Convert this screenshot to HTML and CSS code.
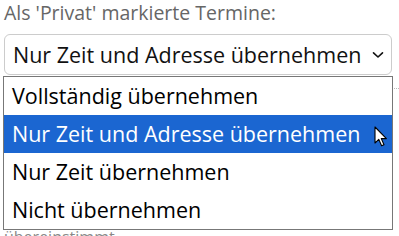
FILE: index.html
```html
<!DOCTYPE html>
<html lang="de">
<head>
    <meta charset="UTF-8">
    <meta name="viewport" content="width=device-width, initial-scale=1.0">
    <title>Termine</title>
    <link rel="stylesheet" href="styles.css">
</head>
<body>
    <div class="page">
        <div class="field-label">Als 'Privat' markierte Termine:</div>

        <div class="select">
            <span class="select-value">Nur Zeit und Adresse übernehmen</span>
            <svg class="chevron" width="12" height="8" viewBox="0 0 12 8">
                <path d="M1.5 1.8 L6 6 L10.5 1.8" fill="none" stroke="#111" stroke-width="1.6" stroke-linecap="round" stroke-linejoin="round"/>
            </svg>
        </div>

        <!-- content of the page that sits under the open list -->
        <div class="behind">
            <div class="separator"></div>
            <div class="behind-text">
                <div class="behind-line"><span class="hidden-part">Termine, deren Ort nicht mit der</span><span class="tail">A</span></div>
                <div class="behind-line"><span class="hidden-part">Adresse eines Kontakts</span><span class="tail">n</span></div>
                <div class="behind-line">übereinstimmt</div>
            </div>
        </div>

        <ul class="dropdown">
            <li>Vollständig übernehmen</li>
            <li class="active">Nur Zeit und Adresse übernehmen</li>
            <li>Nur Zeit übernehmen</li>
            <li>Nicht übernehmen</li>
        </ul>

        <svg class="cursor" width="14" height="22" viewBox="0 0 14 22">
            <path d="M1 1 L1 17 L4.8 13.4 L7.6 19.8 L10 18.8 L7.3 12.6 L12.4 12.6 Z" fill="#fff" stroke="#000" stroke-width="1.1" stroke-linejoin="round"/>
        </svg>
    </div>
</body>
</html>
```

FILE: styles.css
```css
* {
    margin: 0;
    padding: 0;
    box-sizing: border-box;
}

body {
    background-color: #fff;
    font-family: 'Open Sans', 'Noto Sans', sans-serif;
    overflow: hidden;
}

.page {
    position: relative;
    width: 399px;
    height: 236px;
    padding: 0 7px 0 4px;
}

.field-label {
    color: #666;
    font-size: 19.5px;
    line-height: 26px;
    padding-top: 0;
    height: 34px;
}

.select {
    display: flex;
    align-items: center;
    justify-content: space-between;
    height: 41px;
    border: 1px solid #ccc;
    border-radius: 6px;
    padding: 0 7px 0 8px;
    font-size: 21.5px;
    color: #111;
}

.select-value {
    line-height: 28px;
    white-space: nowrap;
}

.chevron {
    margin-top: 1px;
}

.behind {
    color: #888;
    font-size: 16px;
}

.separator {
    margin: 13px 0 0 0;
    border-top: 1px dotted #bbb;
    margin-right: -7px;
}

.behind-text {
    padding-top: 86px;
}

.behind-line {
    display: grid;
    grid-template-columns: 389px auto;
    white-space: nowrap;
    line-height: 25px;
}

.hidden-part {
    overflow: hidden;
}

.tail {
    overflow: hidden;
}

.dropdown {
    position: absolute;
    left: 3px;
    top: 76px;
    width: 390px;
    list-style: none;
    background: #fff;
    border: 1px solid #777;
    font-size: 21.5px;
    color: #000;
}

.dropdown li {
    height: 38px;
    line-height: 38px;
    padding-left: 8px;
    white-space: nowrap;
}

.dropdown li.active {
    background-color: #1b66d1;
    color: #fff;
}

.cursor {
    position: absolute;
    left: 374px;
    top: 126px;
}
```
